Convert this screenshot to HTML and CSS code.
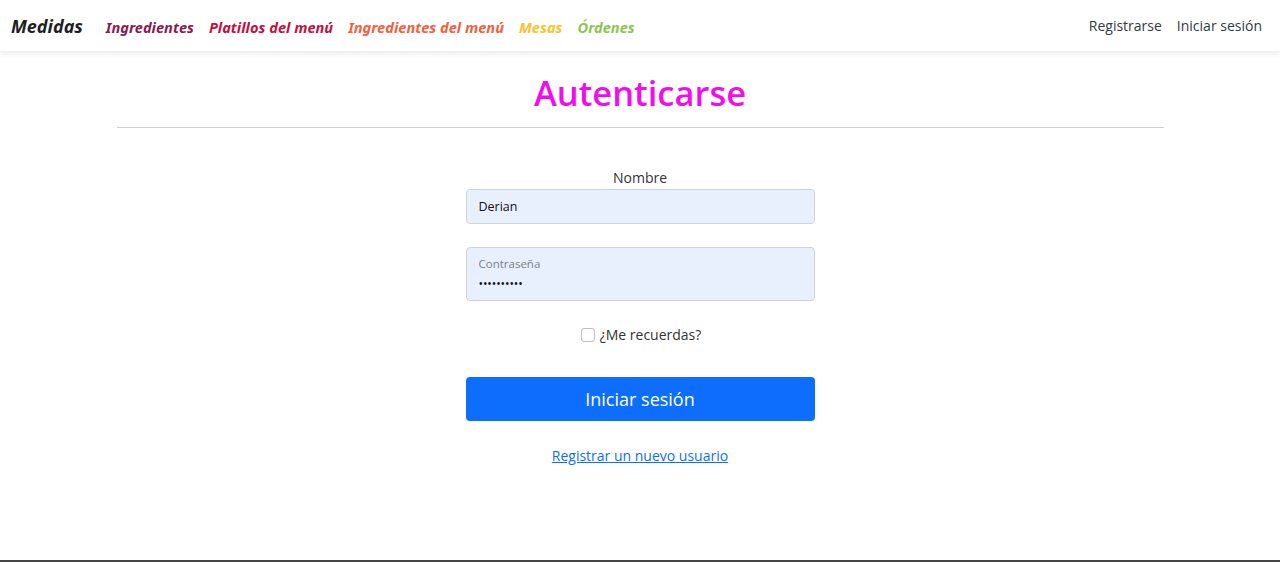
FILE: index.html
```html
<!DOCTYPE html>
<html lang="es">
<head>
<meta charset="utf-8">
<title>Autenticarse</title>
<link rel="stylesheet" href="styles.css">
</head>
<body>
<header class="navbar">
  <nav class="nav-left">
    <a class="brand" href="#">Medidas</a>
    <a class="nav-link c1" href="#">Ingredientes</a>
    <a class="nav-link c2" href="#">Platillos del menú</a>
    <a class="nav-link c3" href="#">Ingredientes del menú</a>
    <a class="nav-link c4" href="#">Mesas</a>
    <a class="nav-link c5" href="#">Órdenes</a>
  </nav>
  <nav class="nav-right">
    <a class="auth-link" href="#">Registrarse</a>
    <a class="auth-link" href="#">Iniciar sesión</a>
  </nav>
</header>
<main class="main">
  <h1 class="title">Autenticarse</h1>
  <hr class="divider">
  <form class="login-form">
    <label class="field-label" for="nombre">Nombre</label>
    <input class="input" id="nombre" type="text" value="Derian">
    <div class="floating">
      <span class="floating-label">Contraseña</span>
      <span class="dots">••••••••••</span>
    </div>
    <label class="check">
      <span class="check-box"></span>
      <span>¿Me recuerdas?</span>
    </label>
    <button class="btn" type="button">Iniciar sesión</button>
    <a class="register" href="#">Registrar un nuevo usuario</a>
  </form>
</main>
<footer class="footer"></footer>
</body>
</html>
```
FILE: styles.css
```css
* { box-sizing: border-box; }
html, body { margin: 0; padding: 0; }
body {
  font-family: "Open Sans", "Noto Sans", sans-serif;
  color: #212529;
  background: #fff;
  height: 100vh;
  display: flex;
  flex-direction: column;
  overflow: hidden;
}
a { text-decoration: none; }
.navbar {
  height: 52px;
  display: flex;
  align-items: center;
  justify-content: space-between;
  padding: 0 18px 0 11px;
  box-shadow: 0 2px 5px rgba(0,0,0,0.08);
  border-bottom: 1px solid #f0f0f0;
  flex: none;
}
.nav-left { display: flex; align-items: baseline; gap: 0; }
.brand {
  font-family: "Noto Sans", sans-serif;
  font-style: italic;
  font-weight: 700;
  font-size: 18px;
  color: #1f1f24;
  margin-right: 23px;
}
.nav-link {
  font-family: "Noto Sans", sans-serif;
  font-style: italic;
  font-weight: 700;
  font-size: 14.6px;
  margin-right: 15px;
  letter-spacing: 0;
}
.c1 { color: #8a1a4c; }
.c2 { color: #c4103f; }
.c3 { color: #f2613d; }
.c4 { color: #f9c22e; }
.c5 { color: #8fc353; }
.nav-right { display: flex; gap: 15px; }
.auth-link { color: #333a40; font-size: 14px; }
.main {
  flex: 1;
  display: flex;
  flex-direction: column;
  align-items: center;
}
.title {
  margin: 18px 0 0;
  font-size: 34.5px;
  font-weight: 600;
  color: #f20cf0;
  line-height: 46px;
}
.divider {
  width: 1047px;
  margin: 11px 0 0;
  border: 0;
  border-top: 1px solid #cfcfcf;
}
.login-form {
  width: 349px;
  display: flex;
  flex-direction: column;
  align-items: center;
  margin-top: 40px;
}
.field-label { font-size: 14px; line-height: 20px; color: #333; }
.input {
  width: 100%;
  height: 35px;
  margin-top: 1px;
  border: 1px solid #cdd4dc;
  border-radius: 4px;
  background: #e8f0fe;
  padding: 0 12px;
  font-family: "Open Sans", "Noto Sans", sans-serif;
  font-size: 12.5px;
  color: #111;
}
.floating {
  width: 100%;
  height: 54px;
  margin-top: 23px;
  border: 1px solid #cdd4dc;
  border-radius: 4px;
  background: #e8f0fe;
  padding: 8px 12px 0;
  display: flex;
  flex-direction: column;
}
.floating-label { font-size: 11.5px; color: #7a7f86; line-height: 16px; }
.dots { font-size: 12px; letter-spacing: -0.1px; color: #111; line-height: 14px; margin-top: 5px; }
.check {
  display: flex;
  align-items: center;
  gap: 5px;
  margin-top: 24px;
  font-size: 14px;
  color: #333;
  margin-left: 2px;
}
.check-box {
  width: 14px;
  height: 14px;
  border: 1px solid #bdbdbd;
  border-radius: 3px;
  background: #fff;
}
.btn {
  width: 100%;
  height: 44px;
  margin-top: 33px;
  border: 0;
  border-radius: 4px;
  background: #0d6efd;
  color: #fff;
  font-family: "Open Sans", "Noto Sans", sans-serif;
  font-size: 18px;
}
.register {
  margin-top: 25px;
  color: #0d6efd;
  text-decoration: underline;
  font-size: 14px;
}
.footer {
  flex: none;
  height: 2px;
  background: #454545;
}
```
